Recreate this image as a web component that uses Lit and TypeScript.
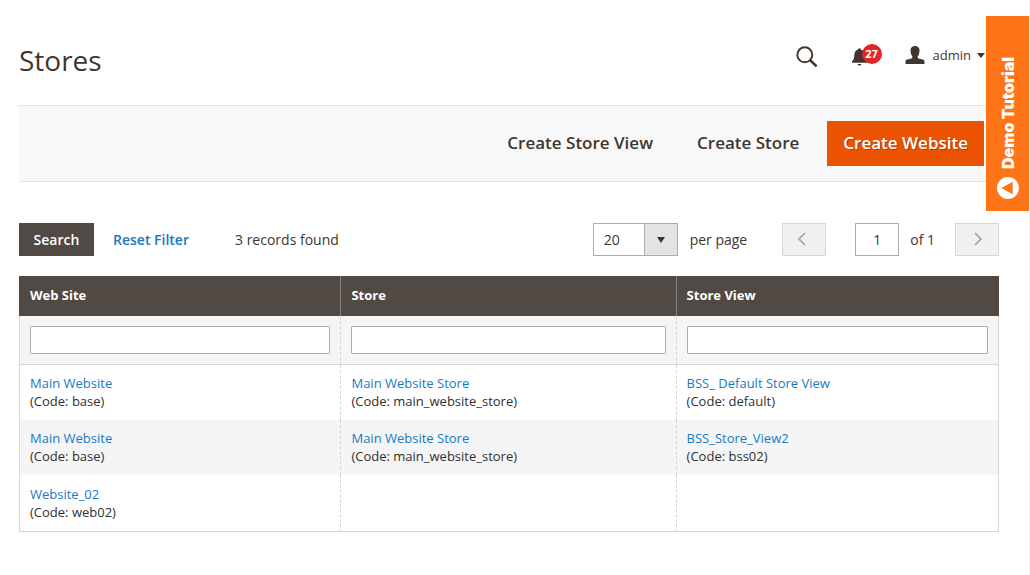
import { LitElement, html, css, svg, nothing } from "lit";
import { customElement, property } from "lit/decorators.js";

interface Entity {
  name: string;
  code: string;
}

const COLUMNS = ["Web Site", "Store", "Store View"];

const ROWS: (Entity | null)[][] = [
  [
    { name: "Main Website", code: "base" },
    { name: "Main Website Store", code: "main_website_store" },
    { name: "BSS_ Default Store View", code: "default" },
  ],
  [
    { name: "Main Website", code: "base" },
    { name: "Main Website Store", code: "main_website_store" },
    { name: "BSS_Store_View2", code: "bss02" },
  ],
  [{ name: "Website_02", code: "web02" }, null, null],
];

const chevron = (d: string) => html`
  <svg class="chevron" width="8" height="14" viewBox="0 0 8 14" aria-hidden="true">
    ${svg`<path d=${d} fill="none" stroke="currentColor" stroke-width="1.6" />`}
  </svg>
`;

@customElement("page-header")
class PageHeader extends LitElement {
  static styles = css`
    :host {
      display: flex;
      align-items: flex-start;
      justify-content: space-between;
      padding: 41px 14px 26px 0;
    }
    h1 {
      margin: 0;
      font-size: 28px;
      line-height: 38px;
      font-weight: 400;
      color: #41362f;
    }
    .tools {
      display: flex;
      align-items: center;
      height: 28px;
      color: #41362f;
    }
    button {
      display: flex;
      align-items: center;
      padding: 0;
      border: 0;
      background: none;
      font: inherit;
      color: inherit;
      cursor: pointer;
    }
    .search {
      padding-top: 4px;
      margin-right: 34px;
    }
    .alerts {
      position: relative;
      padding-top: 4px;
      margin-right: 38px;
    }
    .count {
      position: absolute;
      left: 10px;
      top: 0;
      width: 20px;
      line-height: 20px;
      border-radius: 50%;
      background: #e22626;
      color: #fff;
      font-size: 11px;
      font-weight: 700;
      text-align: center;
    }
    .account {
      gap: 8px;
      font-size: 13px;
      line-height: 18px;
    }
    .caret {
      margin-left: -2px;
    }
  `;

  render() {
    return html`
      <h1>Stores</h1>
      <div class="tools">
        <button class="search" aria-label="Search">
          <svg width="22" height="22" viewBox="0 0 22 22" aria-hidden="true">
            <circle cx="8.8" cy="8.8" r="7.500" fill="none" stroke="currentColor" stroke-width="1.9" />
            <path d="M14 14 20.6 20.400" stroke="currentColor" stroke-width="2.6" />
          </svg>
        </button>
        <button class="alerts" aria-label="Notifications">
          <svg width="15" height="18" viewBox="0 0 15 18" aria-hidden="true">
            <path
              d="M7.5.3c.8 0 1.2.5 1.300 1.200 2.500.6 3.700 2.500 3.800 5 .1 3.400.9 5.300 2.400 7v1.300H0v-1.300c1.500-1.700 2.300-3.600 2.400-7 .1-2.500 1.300-4.400 3.800-5C6.300.8 6.700.3 7.500.3zM5.600 15.900h3.800c0 .9-.8 1.500-1.900 1.500s-1.900-.6-1.900-1.500z"
              fill="currentColor"
            />
          </svg>
          <span class="count">27</span>
        </button>
        <button class="account">
          <svg width="20" height="18" viewBox="0 0 20 18" aria-hidden="true">
            <path
              d="M10 0c2.800 0 4.500 1.700 4.500 4.400 0 2.400-.7 4.500-1.800 5.700v1.400c0 .5.300.7.900.9l4.200 1.200c1.100.3 1.700 1 1.700 2.200V18H.5v-2.200c0-1.200.6-1.900 1.700-2.200l4.200-1.200c.6-.2.900-.4.900-.9v-1.400C6.200 8.900 5.500 6.800 5.500 4.400 5.500 1.700 7.200 0 10 0z"
              fill="currentColor"
            />
          </svg>
          <span>admin</span>
          <svg class="caret" width="8" height="5" viewBox="0 0 8 5" aria-hidden="true">
            <path d="M0 0h8L4 5z" fill="currentColor" />
          </svg>
        </button>
      </div>
    `;
  }
}

@customElement("page-actions")
class PageActions extends LitElement {
  static styles = css`
    :host {
      display: flex;
      justify-content: flex-end;
      gap: 12px;
      padding: 15px;
      border: solid #e3e3e3;
      border-width: 1px 0;
      background: #f8f8f8;
    }
    button {
      padding: 0 16px 2px;
      border: 0;
      background: none;
      font: 600 17px/43px "Open Sans", sans-serif;
      color: #41362f;
      cursor: pointer;
    }
    .primary {
      background: #eb5202;
      color: #fff;
      text-shadow: 1px 1px 0 rgba(0, 0, 0, 0.25);
    }
  `;

  render() {
    return html`
      <button>Create Store View</button>
      <button>Create Store</button>
      <button class="primary">Create Website</button>
    `;
  }
}

@customElement("grid-toolbar")
class GridToolbar extends LitElement {
  @property({ type: Number }) total = 0;

  static styles = css`
    :host {
      display: flex;
      align-items: center;
      justify-content: space-between;
      font-size: 14px;
      line-height: 33px;
      color: #41362f;
    }
    .group {
      display: flex;
      align-items: center;
    }
    button,
    input,
    select {
      box-sizing: border-box;
      height: 33px;
      margin: 0;
      border-radius: 0;
      font: inherit;
      color: inherit;
    }
    .search {
      width: 75px;
      padding: 0;
      border: 0;
      background: #514943;
      color: #fff;
      font-weight: 600;
      cursor: pointer;
    }
    .reset {
      margin: 0 46px 0 19px;
      padding: 0;
      border: 0;
      background: none;
      color: #1979c3;
      font-weight: 600;
      cursor: pointer;
    }
    .select {
      display: grid;
      grid-template-columns: 1fr 34px;
      width: 85px;
      margin-right: 12px;
    }
    select {
      grid-area: 1 / 1 / 2 / 3;
      appearance: none;
      padding: 0 10px;
      border: 1px solid #adadad;
      background: #fff;
      line-height: 31px;
    }
    .arrow {
      grid-area: 1 / 2;
      display: grid;
      place-items: center;
      border: 1px solid #adadad;
      background: #e3e3e3;
      pointer-events: none;
      z-index: 1;
    }
    .step {
      width: 44px;
      padding: 0 4px 2px 0;
      border: 1px solid #d6d6d6;
      background: #f0f0f0;
      color: #a5a3a1;
      display: grid;
      place-items: center;
    }
    .prev {
      margin: 0 29px 0 35px;
    }
    .next {
      margin-left: 20px;
      padding: 0 0 2px 2px;
    }
    .page {
      width: 44px;
      margin-right: 11px;
      padding: 0;
      border: 1px solid #adadad;
      text-align: center;
    }
  `;

  render() {
    return html`
      <div class="group">
        <button class="search">Search</button>
        <button class="reset">Reset Filter</button>
        <span>${this.total} records found</span>
      </div>
      <div class="group">
        <span class="select">
          <select id="limit">
            <option>20</option>
            <option>30</option>
            <option>50</option>
            <option>100</option>
            <option>200</option>
          </select>
          <span class="arrow">
            <svg width="8" height="6" viewBox="0 0 8 6" aria-hidden="true">
              <path d="M0 0h8L4 6z" fill="#41362f" />
            </svg>
          </span>
        </span>
        <label for="limit">per page</label>
        <button class="step prev" aria-label="Previous page" disabled>${chevron("M7 1 1 7l6 6")}</button>
        <input class="page" id="page" type="text" value="1" />
        <label for="page">of 1</label>
        <button class="step next" aria-label="Next page" disabled>${chevron("M1 1l6 6-6 6")}</button>
      </div>
    `;
  }
}

@customElement("store-grid")
class StoreGrid extends LitElement {
  static styles = css`
    :host {
      display: block;
    }
    table {
      width: 100%;
      table-layout: fixed;
      border-collapse: separate;
      border-spacing: 0;
      font-size: 13px;
      line-height: 18px;
      color: #303030;
    }
    .web {
      width: 32.8%;
    }
    .store {
      width: 34.2%;
    }
    th {
      padding: 10px 10px 12px;
      border-left: 1px solid #8a837f;
      background: #514943;
      color: #fff;
      font-weight: 700;
      text-align: left;
    }
    th:first-child {
      border-left-color: #514943;
    }
    td {
      padding: 9px 10px 10px;
      border-left: 1px dashed #d6d6d6;
      vertical-align: top;
    }
    td:first-child {
      border-left-style: solid;
    }
    td:last-child {
      border-right: 1px solid #d6d6d6;
    }
    .filters td {
      padding: 10px;
      border-bottom: 1px solid #d6d6d6;
      background: #f5f5f5;
    }
    .even td {
      background: #f5f5f5;
    }
    .entry:last-child td {
      padding: 10px;
      border-bottom: 1px solid #d6d6d6;
    }
    input {
      display: block;
      box-sizing: border-box;
      width: 100%;
      height: 28px;
      margin: 0;
      padding: 0 8px;
      border: 1px solid #adadad;
      border-radius: 1px;
      background: #fff;
      font: inherit;
    }
    a {
      color: #1979c3;
      text-decoration: none;
    }
  `;

  render() {
    return html`
      <table>
        <colgroup>
          <col class="web" />
          <col class="store" />
          <col />
        </colgroup>
        <thead>
          <tr>
            ${COLUMNS.map((c) => html`<th scope="col">${c}</th>`)}
          </tr>
        </thead>
        <tbody>
          <tr class="filters">
            ${COLUMNS.map((c) => html`<td><input type="text" aria-label=${c} /></td>`)}
          </tr>
          ${ROWS.map(
            (row, i) => html`
              <tr class="entry ${i % 2 ? "even" : "odd"}">
                ${row.map(
                  (e) => html`<td>${e ? html`<a href="#">${e.name}</a><br />(Code: ${e.code})` : nothing}</td>`
                )}
              </tr>
            `
          )}
        </tbody>
      </table>
    `;
  }
}

@customElement("app-root")
class AppRoot extends LitElement {
  static styles = css`
    :host {
      display: block;
      position: relative;
      box-sizing: border-box;
      min-height: 100vh;
      padding: 0 30px 43px 19px;
      border-right: 1px solid #efefef;
      background: #fff;
      font-family: "Open Sans", sans-serif;
    }
    grid-toolbar {
      margin: 41px 0 20px;
    }
    .demo {
      position: absolute;
      top: 16px;
      right: 0;
      display: flex;
      flex-direction: column;
      align-items: center;
      gap: 8px;
      padding: 41px 0 12px;
      width: 43px;
      border: 0;
      background: #ff7416;
      color: #fff;
      font: 900 16px/22px Inter, "Open Sans", sans-serif;
      cursor: pointer;
    }
    .label {
      writing-mode: vertical-rl;
      rotate: 180deg;
    }
  `;

  render() {
    return html`
      <page-header></page-header>
      <page-actions></page-actions>
      <grid-toolbar .total=${ROWS.length}></grid-toolbar>
      <store-grid></store-grid>
      <button class="demo">
        <span class="label">Demo Tutorial</span>
        <svg width="22" height="22" viewBox="0 0 22 22" aria-hidden="true">
          <circle cx="11" cy="11" r="11" fill="#fff" />
          <path d="M4.300 11 15.700 4.800v12.400z" fill="#ff7416" />
        </svg>
      </button>
    `;
  }
}
